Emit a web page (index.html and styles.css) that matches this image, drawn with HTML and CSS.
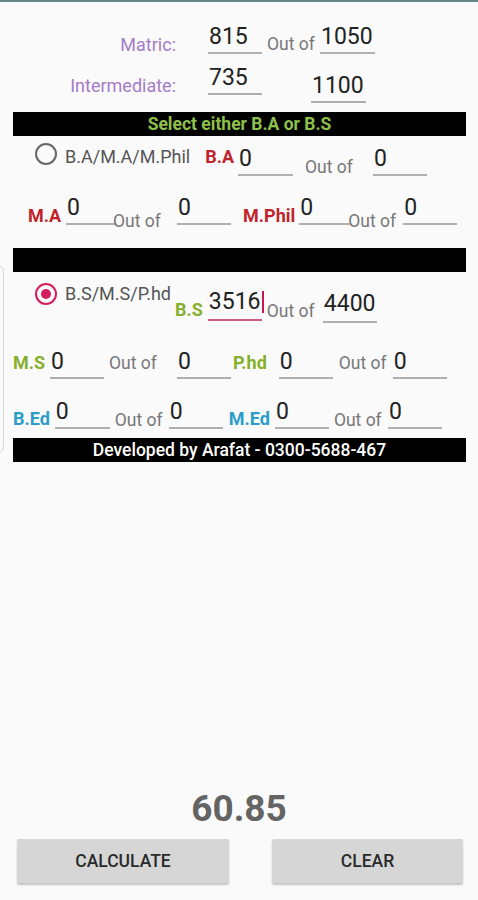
FILE: index.html
```html
<!DOCTYPE html>
<html lang="en">
<head>
    <meta charset="UTF-8">
    <meta name="viewport" content="width=device-width, initial-scale=1.0">
    <title>Aggregate Calculator</title>
    <link rel="stylesheet" href="styles.css">
</head>
<body>
    <div class="topline"></div>
    <div class="side-box"></div>

    <div class="row r1">
        <span class="lbl-main mt10">Matric:</span>
        <span class="field ml32">815</span>
        <span class="out ml5 mt9">Out of</span>
        <span class="field ml4 w55">1050</span>
    </div>
    <div class="row r2">
        <span class="lbl-main mt10">Intermediate:</span>
        <span class="field ml32">735</span>
        <span class="field ml49 mt8 w55">1100</span>
    </div>

    <div class="bar bar1">Select either B.A or B.S</div>

    <div class="row r-ba">
        <span class="radio ml35"></span>
        <span class="choice ml8 mt4">B.A/M.A/M.Phil</span>
        <span class="lbl red ml15 mt4">B.A</span>
        <span class="field ml4 mt4 w55">0</span>
        <span class="out ml12 mt14">Out of</span>
        <span class="field ml19 mt4">0</span>
    </div>
    <div class="row r-ma">
        <span class="lbl red ml28 mt10">M.A</span>
        <span class="field ml5 w49">0</span>
        <span class="out mlneg mt15">Out of</span>
        <span class="field ml15">0</span>
        <span class="lbl red ml12 mt10">M.Phil</span>
        <span class="field ml4 w51">0</span>
        <span class="out mlneg mt15">Out of</span>
        <span class="field ml6">0</span>
    </div>

    <div class="bar bar2"></div>

    <div class="row r-bs">
        <span class="radio checked ml35"></span>
        <span class="choice ml8 mt1">B.S/M.S/P.hd</span>
        <span class="lbl green ml4 mt17">B.S</span>
        <span class="field focus ml5 mt7">3516<span class="caret"></span></span>
        <span class="out ml5 mt18">Out of</span>
        <span class="field tall ml7 mt9">4400</span>
    </div>
    <div class="row r-ms">
        <span class="lbl green ml13 mt3">M.S</span>
        <span class="field ml5">0</span>
        <span class="out ml5 mt3">Out of</span>
        <span class="field ml19">0</span>
        <span class="lbl green ml2 mt3">P.hd</span>
        <span class="field ml12">0</span>
        <span class="out ml6 mt3">Out of</span>
        <span class="field ml5">0</span>
    </div>
    <div class="row r-bed">
        <span class="lbl blue ml13 mt9">B.Ed</span>
        <span class="field ml5 w55">0</span>
        <span class="out ml5 mt10">Out of</span>
        <span class="field ml5">0</span>
        <span class="lbl blue ml6 mt9">M.Ed</span>
        <span class="field ml5">0</span>
        <span class="out ml5 mt10">Out of</span>
        <span class="field ml5">0</span>
    </div>

    <div class="bar bar3">Developed by Arafat - 0300-5688-467</div>

    <div class="bottom">
        <div class="result">60.85</div>
        <div class="buttons">
            <button class="btn btn-calc">CALCULATE</button>
            <button class="btn btn-clear">CLEAR</button>
        </div>
    </div>
</body>
</html>
```

FILE: styles.css
```css
* {
    box-sizing: border-box;
}
body {
    margin: 0;
    min-height: 100vh;
    display: flex;
    flex-direction: column;
    background: #fafafa;
    font-family: Roboto, "Noto Sans", sans-serif;
}
.topline {
    height: 2px;
    background: #648888;
}
.side-box {
    position: absolute;
    left: -20px;
    top: 265px;
    width: 24px;
    height: 188px;
    border: 1px solid #d6d6d6;
    border-radius: 6px;
}

/* rows */
.row {
    display: flex;
    align-items: flex-start;
    white-space: nowrap;
}
.row > * {
    flex-shrink: 0;
}
.r1 { margin-top: 23px; }
.r2 { margin-top: 11px; }
.r-ba { margin-top: 7px; }
.r-ma { margin-top: 19px; }
.r-bs { margin-top: 11px; }
.r-ms { margin-top: 27px; }
.r-bed { margin-top: 21px; }

.lbl-main {
    width: 176px;
    text-align: right;
    font-size: 18px;
    line-height: 20px;
    color: #a47cc6;
}
.lbl {
    font-size: 18px;
    line-height: 20px;
    font-weight: bold;
}
.red { color: #c0242a; }
.green { color: #86b02c; }
.blue { color: #2b9dc8; }
.choice {
    font-size: 18px;
    line-height: 20px;
    color: #555;
}
.out {
    width: 49px;
    font-size: 17.5px;
    line-height: 20px;
    color: #777;
}
.field {
    display: block;
    width: 54px;
    padding: 0 0 3px 1px;
    font-size: 23px;
    line-height: 24px;
    color: #222;
    border-bottom: 2px solid #b0b0b0;
}
.field.tall {
    padding-bottom: 5px;
}
.field.focus {
    padding-bottom: 5px;
    border-bottom-color: #d0588a;
}
.caret {
    display: inline-block;
    width: 2px;
    height: 22px;
    margin-left: 1px;
    vertical-align: -4px;
    background: #c2185b;
}
.w49 { width: 49px; }
.w51 { width: 51px; }
.w55 { width: 55px; }

.radio {
    width: 22px;
    height: 22px;
    border: 2px solid #666;
    border-radius: 50%;
    display: flex;
    align-items: center;
    justify-content: center;
}
.radio.checked {
    border-color: #d41d5c;
}
.radio.checked::after {
    content: "";
    width: 10px;
    height: 10px;
    border-radius: 50%;
    background: #d41d5c;
}

/* spacing helpers */
.ml2 { margin-left: 2px; }
.ml4 { margin-left: 4px; }
.ml5 { margin-left: 5px; }
.ml6 { margin-left: 6px; }
.ml7 { margin-left: 7px; }
.ml8 { margin-left: 8px; }
.ml12 { margin-left: 12px; }
.ml13 { margin-left: 13px; }
.ml15 { margin-left: 15px; }
.ml19 { margin-left: 19px; }
.ml28 { margin-left: 28px; }
.ml32 { margin-left: 32px; }
.ml35 { margin-left: 35px; }
.ml49 { margin-left: 49px; }
.mlneg { margin-left: -2px; }
.mt1 { margin-top: 1px; }
.mt3 { margin-top: 3px; }
.mt4 { margin-top: 4px; }
.mt7 { margin-top: 7px; }
.mt8 { margin-top: 8px; }
.mt9 { margin-top: 9px; }
.mt10 { margin-top: 10px; }
.mt14 { margin-top: 14px; }
.mt15 { margin-top: 15px; }
.mt17 { margin-top: 17px; }
.mt18 { margin-top: 18px; }

/* black bars */
.bar {
    margin: 0 12px 0 13px;
    height: 24px;
    background: #000;
    text-align: center;
    font-size: 17.5px;
    line-height: 24px;
}
.bar1 {
    margin-top: 9px;
    color: #8fc04a;
    font-weight: bold;
}
.bar2 {
    margin-top: 17px;
}
.bar3 {
    margin-top: 8px;
    color: #fff;
    font-weight: 500;
}

/* bottom */
.bottom {
    margin-top: auto;
}
.result {
    text-align: center;
    font-size: 37px;
    line-height: 44px;
    font-weight: bold;
    color: #646464;
}
.buttons {
    display: flex;
    margin: 8px 0 17px 17px;
}
.btn {
    height: 44px;
    border: none;
    border-radius: 2px;
    background: #d6d6d6;
    box-shadow: 0 2px 2px rgba(0, 0, 0, 0.22);
    font-family: Roboto, sans-serif;
    font-size: 17.5px;
    font-weight: 500;
    color: #2a2a2a;
    padding: 0;
}
.btn-calc {
    width: 212px;
}
.btn-clear {
    width: 191px;
    margin-left: 43px;
}
```
